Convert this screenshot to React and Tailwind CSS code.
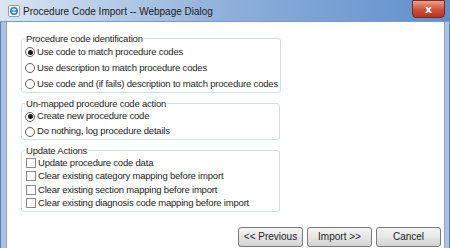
import React from "react";

function Radio({ checked }) {
  return (
    <span className="inline-flex items-center justify-center w-[10px] h-[10px] rounded-full border border-[#5c5c5c] bg-white mr-[2px] shrink-0">
      {checked && <span className="w-[5px] h-[5px] rounded-full bg-[#1a1a1a]" />}
    </span>
  );
}

function Check() {
  return <span className="inline-block w-[10px] h-[10px] border border-[#8a8a8a] bg-white mr-[2px] ml-[1px] shrink-0" />;
}

function Row({ children, h }) {
  return <div className={"flex items-center whitespace-nowrap " + h}>{children}</div>;
}

function Group({ title, children, cls }) {
  return (
    <fieldset className={"w-[259px] border border-[#d5dde3] rounded-[3px] pl-[3px] pr-[2px] " + cls}>
      <legend className="px-[1px] leading-[11px] text-[#1e1e1e]">{title}</legend>
      {children}
    </fieldset>
  );
}

function Btn({ children }) {
  return (
    <button className="w-[65px] h-[20px] border border-[#7a7a7a] rounded-[3px] bg-gradient-to-b from-[#f4f4f4] via-[#e6e6e6] to-[#d2d2d2] text-[#1e1e1e] text-[10px] leading-none whitespace-nowrap">
      {children}
    </button>
  );
}

export default function App() {
  return (
    <div
      className="w-[450px] h-[248px] flex flex-col overflow-hidden bg-[#6e98cc]"
      style={{ fontFamily: "'Liberation Sans', Arial, sans-serif" }}
    >
      <div className="h-[22px] flex items-center relative bg-gradient-to-r from-[#dbe6f2] via-[#8fb0da] to-[#5f8fcc] border-b border-[#7e9bbf]">
        <svg width="12" height="12" viewBox="0 0 12 12" className="ml-[8px] mt-[1px]">
          <rect x="0.5" y="0.5" width="11" height="11" rx="1.5" fill="#fff" stroke="#8aa0b8" />
          <circle cx="6" cy="6" r="3.2" fill="none" stroke="#2f7fd8" strokeWidth="1.6" />
          <path d="M2.6 6h6.8" stroke="#2f7fd8" strokeWidth="1.4" />
        </svg>
        <span className="ml-[3px] text-[10px] text-[#1c1c1c] mt-[1px]">
          Procedure Code Import -- Webpage Dialog
        </span>
        <div className="absolute right-[5px] top-0 w-[33px] h-[18px] rounded-b-[4px] border border-[#7a2a20] bg-gradient-to-b from-[#e9a08c] via-[#d2533d] to-[#b8321f] flex items-center justify-center">
          <span className="text-white text-[11px] font-bold leading-none" style={{ fontFamily: "'DejaVu Sans', sans-serif" }}>x</span>
        </div>
      </div>
      <div className="flex-1 flex">
        <div className="w-[6px] bg-[#a9c4e6] border-l border-[#5d7fa8]" />
        <div className="flex-1 bg-white border-l border-[#8ea8c8] pl-[14px] pt-[11px] text-[9.5px] tracking-[-0.2px] text-[#1e1e1e] flex flex-col">
          <Group title="Procedure code identification" cls="pb-0">
            <Row h="h-[16px]"><Radio checked />Use code to match procedure codes</Row>
            <Row h="h-[16px]"><Radio />Use description to match procedure codes</Row>
            <Row h="h-[16px]"><Radio />Use code and (if fails) description to match procedure codes</Row>
          </Group>
          <Group title="Un-mapped procedure code action" cls="mt-[5px] pb-0">
            <Row h="h-[15px]"><Radio checked />Create new procedure code</Row>
            <Row h="h-[15px]"><Radio />Do nothing, log procedure details</Row>
          </Group>
          <Group title="Update Actions" cls="mt-[5px] pb-[1px]">
            <Row h="h-[13.5px]"><Check />Update procedure code data</Row>
            <Row h="h-[13.5px]"><Check />Clear existing category mapping before import</Row>
            <Row h="h-[13.5px]"><Check />Clear existing section mapping before import</Row>
            <Row h="h-[13.5px]"><Check />Clear existing diagnosis code mapping before import</Row>
          </Group>
          <div className="flex justify-end gap-[4px] mt-auto mb-[1px] pr-[3px] tracking-normal">
            <Btn>&lt;&lt; Previous</Btn>
            <Btn>Import &gt;&gt;</Btn>
            <Btn>Cancel</Btn>
          </div>
        </div>
        <div className="w-[6px] bg-[#a9c4e6] border-r border-[#5d7fa8] border-l border-l-[#8ea8c8]" />
      </div>
    </div>
  );
}
